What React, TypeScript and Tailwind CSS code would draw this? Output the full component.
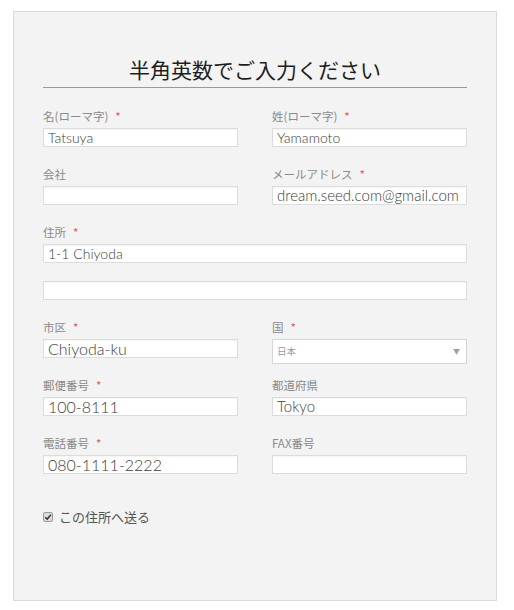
import React from "react";

const jp = "font-['Noto_Sans_CJK_JP',sans-serif]";
const latin = "font-['Lato','Noto_Sans_CJK_JP',sans-serif] font-light";

const Label = ({ text, required }: { text: string; required?: boolean }) => (
  <div className={`h-[16px] leading-[16px] text-[11.5px] text-[#8a8a8a] ${jp}`}>
    {text}
    {required && <span className="ml-[7px] text-[#e05a5a]">*</span>}
  </div>
);

const TextBox = ({ value, size = "text-[14px]" }: { value?: string; size?: string }) => (
  <div
    className={`mt-[4px] h-[19px] w-full border border-[#dcdcdc] bg-white pl-[4px] leading-[17px] text-[#3c3c3c] shadow-[inset_0_1px_1px_rgba(0,0,0,0.04)] ${latin} ${size}`}
  >
    {value}
  </div>
);

const Field = ({
  label,
  required,
  value,
  size,
}: {
  label: string;
  required?: boolean;
  value?: string;
  size?: string;
}) => (
  <div className="flex flex-col">
    <Label text={label} required={required} />
    <TextBox value={value} size={size} />
  </div>
);

const App = () => {
  return (
    <div className="min-h-[610px] w-[514px] bg-white pt-[11px] pl-[13px]">
      <div className="h-[590px] w-[484px] border border-[#dadada] bg-[#f3f3f3] px-[29px] pt-[44px]">
        <h1 className={`h-[27px] text-center text-[21px] leading-[27px] text-[#1e1e1e] ${jp}`}>
          半角英数でご入力ください
        </h1>
        <div className="mt-[4px] border-t border-[#9a9a9a]" />

        <div className="mt-[20px] flex flex-col gap-[19px]">
          <div className="grid grid-cols-2 gap-x-[34px]">
            <Field label="名(ローマ字)" required value="Tatsuya" />
            <Field label="姓(ローマ字)" required value="Yamamoto" />
          </div>

          <div className="grid grid-cols-2 gap-x-[34px]">
            <Field label="会社" />
            <Field label="メールアドレス" required value="dream.seed.com@gmail.com" size="text-[15px]" />
          </div>

          <div className="flex flex-col">
            <Field label="住所" required value="1-1 Chiyoda" />
            <div className="mt-[14px]">
              <TextBox />
            </div>
          </div>

          <div className="grid grid-cols-2 gap-x-[34px]">
            <Field label="市区" required value="Chiyoda-ku" size="text-[16px]" />
            <div className="flex flex-col">
              <Label text="国" required />
              <div
                className={`mt-[4px] mb-[-6px] flex h-[25px] items-center justify-between border border-[#d6d6d6] bg-white pl-[4px] pr-[6px] text-[9.5px] text-[#9a9a9a] ${jp}`}
              >
                <span>日本</span>
                <span className="text-[7px] text-[#a0a0a0]">▼</span>
              </div>
            </div>
          </div>

          <div className="grid grid-cols-2 gap-x-[34px]">
            <Field label="郵便番号" required value="100-8111" size="text-[16px]" />
            <Field label="都道府県" value="Tokyo" size="text-[15px]" />
          </div>

          <div className="grid grid-cols-2 gap-x-[34px]">
            <Field label="電話番号" required value="080-1111-2222" size="text-[16px]" />
            <Field label="FAX番号" />
          </div>
        </div>

        <label className={`mt-[33px] flex items-center gap-[6px] text-[13px] text-[#555] ${jp}`}>
          <span className="flex h-[10px] w-[10px] items-center justify-center rounded-[2px] border border-[#9a9a9a] bg-[#dcdcdc]">
            <svg viewBox="0 0 10 10" className="h-[8px] w-[8px]">
              <path d="M1.5 5.2 L4 7.6 L8.6 2.2" fill="none" stroke="#333" strokeWidth="1.8" />
            </svg>
          </span>
          この住所へ送る
        </label>
      </div>
    </div>
  );
};

export default App;
